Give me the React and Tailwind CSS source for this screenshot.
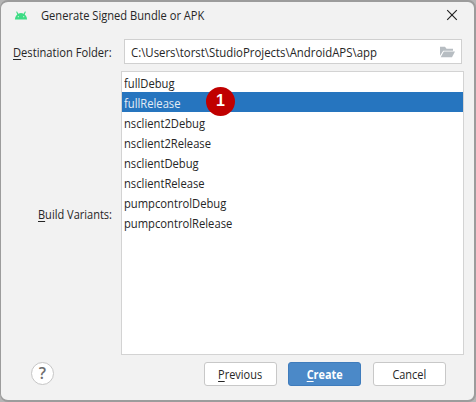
import React from "react";

const variants = [
  "fullDebug",
  "fullRelease",
  "nsclient2Debug",
  "nsclient2Release",
  "nsclientDebug",
  "nsclientRelease",
  "pumpcontrolDebug",
  "pumpcontrolRelease",
];

function AndroidIcon() {
  return (
    <svg className="block h-[9px] w-[14px]" viewBox="0 0 14 9">
      <path d="M.9 8.4a6.1 6.4 0 0 1 12.2 0z" fill="#3ddc84" />
      <path d="M4 3.8 2.8 1M10 3.8 11.2 1" stroke="#3ddc84" strokeWidth="1.1" strokeLinecap="round" />
      <circle cx="4.3" cy="5.7" r="0.6" fill="#d8f5e5" />
      <circle cx="9.7" cy="5.7" r="0.6" fill="#d8f5e5" />
    </svg>
  );
}

function FolderIcon() {
  return (
    <svg className="block h-[12px] w-[15px]" viewBox="0 0 15 12">
      <path d="M0 9.8V.8h5l1.5 1.9H13v2H3.2z" fill="#b7bdc2" />
      <path d="M3.8 5.5H15L12 11.2H.7z" fill="#b7bdc2" />
    </svg>
  );
}

function App() {
  return (
    <div className="h-[402px] w-[476px] overflow-hidden bg-[#b5b5b5] font-['Open_Sans','Noto_Sans',sans-serif] text-[13px] leading-[20px] text-[#262626]">
      <div className="flex h-[402px] flex-col rounded-[8px] border-t-2 border-r-2 border-b-2 border-l border-[#9c9c9c] bg-[#f2f2f2]">
        <header className="flex h-[37px] shrink-0 items-start pt-[3px] pl-[13px]">
          <div className="pt-[6px]"><AndroidIcon /></div>
          <h1 className="mt-px ml-[13px] origin-left scale-x-[0.891] text-[12.5px] whitespace-nowrap">Generate Signed Bundle or APK</h1>
          <svg className="mt-[4px] mr-[16px] ml-auto block size-[12px]" viewBox="0 0 12 12">
            <path d="M1.2 1.2 10.8 10.8M10.8 1.2 1.2 10.8" stroke="#222" strokeWidth="1.15" />
          </svg>
        </header>

        <div className="flex h-[32px] shrink-0 items-start">
          <label className="mt-[4px] ml-[12px] w-[111px] origin-left scale-x-[0.892] text-[12.5px] whitespace-nowrap">
            <u className="underline-offset-2">D</u>estination Folder:
          </label>
          <div className="flex h-[25px] w-[338px] items-center border border-[#d0d0d0] bg-white pr-[6px] pl-[6px]">
            <span className="w-[246px] origin-left scale-x-[0.876] whitespace-nowrap">C:\Users\torst\StudioProjects\AndroidAPS\app</span>
            <div className="ml-auto"><FolderIcon /></div>
          </div>
        </div>

        <div className="flex h-[284px] shrink-0">
          <label className="mt-[134px] ml-[37px] w-[83px] origin-left scale-x-[0.882] text-[12.5px] whitespace-nowrap">
            <u className="underline-offset-2">B</u>uild Variants:
          </label>
          <ul className="h-[284px] w-[343px] border border-[#d3d3d3] bg-white">
            {variants.map((name, i) => (
              <li
                key={name}
                className={
                  "relative h-[20px] pl-[2px] leading-[22px]" +
                  (i === 1 ? " bg-[#2675bf] text-[#e4edf6]" : "")
                }
              >
                <span className="inline-block origin-left scale-x-[0.862]">{name}</span>
                {i === 1 && (
                  <span className="absolute top-[-5px] left-[84px] flex size-[29px] items-center justify-center rounded-full bg-[#c00000] pb-px font-['Liberation_Sans',sans-serif] text-[16px] font-bold text-white">
                    1
                  </span>
                )}
              </li>
            ))}
          </ul>
        </div>

        <footer className="flex items-start pt-[7px] pl-[30px] text-[12.5px]">
          <button className="flex size-[23px] items-center justify-center rounded-full border border-[#c6c6c6] bg-white pb-px text-[16px] font-semibold text-[#6e6e6e]">
            ?
          </button>
          <button className="ml-[150px] flex h-[24px] w-[73px] items-center justify-center rounded-[3px] border border-[#c8c8c8] bg-white pt-[2px]">
            <span className="scale-x-[0.877]"><u className="underline-offset-2">P</u>revious</span>
          </button>
          <button className="ml-[11px] flex h-[24px] w-[73px] items-center justify-center rounded-[3px] border border-[#3f7cbc] bg-[#4b89c8] pt-[2px] font-bold text-white">
            <span className="scale-x-[0.87]"><u className="underline-offset-2">C</u>reate</span>
          </button>
          <button className="ml-[12px] flex h-[24px] w-[73px] items-center justify-center rounded-[3px] border border-[#c8c8c8] bg-white pt-[2px]">
            <span className="scale-x-[0.877]">Cancel</span>
          </button>
        </footer>
      </div>
    </div>
  );
}

export default App;
